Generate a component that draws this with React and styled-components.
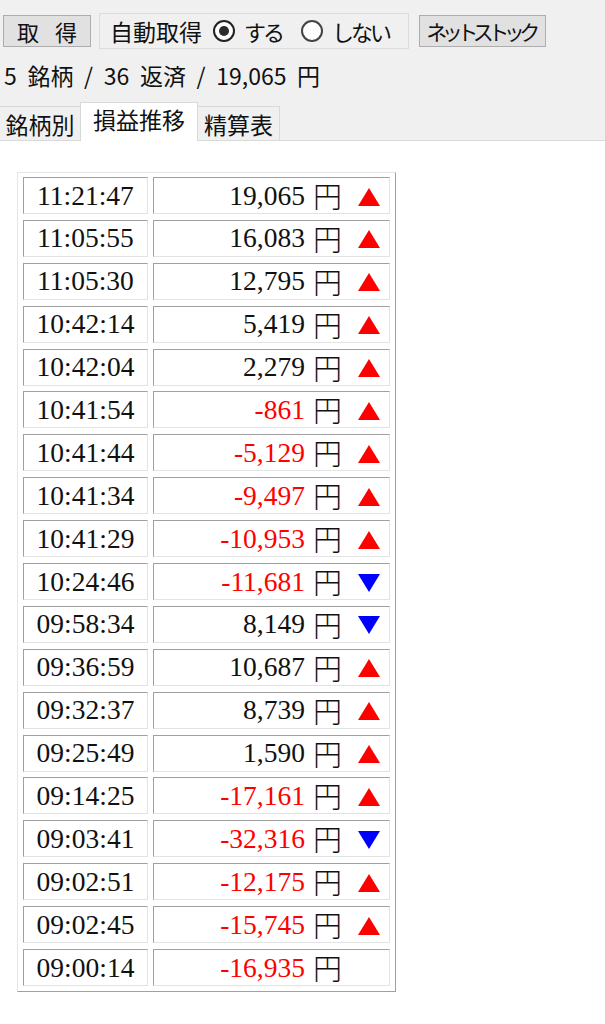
import React from "react";
import styled, { createGlobalStyle } from "styled-components";

const GlobalStyle = createGlobalStyle`
  body {
    margin: 0;
    background: #fff;
    font-family: "Noto Sans CJK JP", "Noto Sans", sans-serif;
    color: #000;
  }
`;

const rows = [
  ["11:21:47", "19,065", "up"],
  ["11:05:55", "16,083", "up"],
  ["11:05:30", "12,795", "up"],
  ["10:42:14", "5,419", "up"],
  ["10:42:04", "2,279", "up"],
  ["10:41:54", "-861", "up"],
  ["10:41:44", "-5,129", "up"],
  ["10:41:34", "-9,497", "up"],
  ["10:41:29", "-10,953", "up"],
  ["10:24:46", "-11,681", "down"],
  ["09:58:34", "8,149", "down"],
  ["09:36:59", "10,687", "up"],
  ["09:32:37", "8,739", "up"],
  ["09:25:49", "1,590", "up"],
  ["09:14:25", "-17,161", "up"],
  ["09:03:41", "-32,316", "down"],
  ["09:02:51", "-12,175", "up"],
  ["09:02:45", "-15,745", "up"],
  ["09:00:14", "-16,935", null],
];

function App() {
  return (
    <>
      <GlobalStyle />
      <Header>
        <Toolbar>
          <Button $width={88}>取 得</Button>
          <Group>
            <GroupLabel>自動取得</GroupLabel>
            <Radio $checked />
            <RadioLabel>する</RadioLabel>
            <Radio $gap={19} />
            <RadioLabel>しない</RadioLabel>
          </Group>
          <Button $width={127} $gap={10} $narrow>
            ネットストック
          </Button>
        </Toolbar>
        <Summary>5 銘柄 / 36 返済 / 19,065 円</Summary>
        <Tabs>
          <Tab $width={82}>銘柄別</Tab>
          <Tab $width={118} $active>
            損益推移
          </Tab>
          <Tab $width={83}>精算表</Tab>
        </Tabs>
      </Header>

      <Content>
        <Table>
          {rows.map(([time, value, dir]) => (
            <React.Fragment key={time}>
              <TimeCell>{time}</TimeCell>
              <AmountCell>
                <Value $negative={value.startsWith("-")}>{value}</Value>
                <Yen>円</Yen>
                <Arrow>
                  {dir && (
                    <svg width="22" height="18" viewBox="0 0 22 18">
                      {dir === "up" ? (
                        <polygon points="11,0 22,18 0,18" fill="#ff0000" />
                      ) : (
                        <polygon points="0,0 22,0 11,18" fill="#0000ff" />
                      )}
                    </svg>
                  )}
                </Arrow>
              </AmountCell>
            </React.Fragment>
          ))}
        </Table>
      </Content>
    </>
  );
}

const Header = styled.div`
  background: #f0f0f0;
  height: 140px;
  border-bottom: 1px solid #d9d9d9;
  display: flex;
  flex-direction: column;
`;

const Toolbar = styled.div`
  display: flex;
  align-items: center;
  padding: 13px 0 0 3px;
  height: 36px;
`;

const Button = styled.div`
  width: ${(p) => p.$width}px;
  height: 32px;
  margin-left: ${(p) => p.$gap || 0}px;
  box-sizing: border-box;
  background: #e1e1e1;
  border: 1px solid #adadad;
  display: flex;
  align-items: center;
  justify-content: center;
  white-space: nowrap;
  font-size: ${(p) => (p.$narrow ? 21 : 22)}px;
  letter-spacing: ${(p) => (p.$narrow ? -5.5 : 0)}px;
  padding-right: ${(p) => (p.$narrow ? 4 : 0)}px;
  word-spacing: 11px;
  color: #111;
`;

const Group = styled.div`
  margin-left: 8px;
  width: 310px;
  height: 36px;
  box-sizing: border-box;
  border: 1px solid #dcdcdc;
  display: flex;
  align-items: center;
  padding-left: 10px;
`;

const GroupLabel = styled.span`
  font-size: 23px;
  color: #111;
`;

const Radio = styled.span`
  width: 22px;
  height: 22px;
  box-sizing: border-box;
  margin-left: ${(p) => p.$gap || 11}px;
  border-radius: 50%;
  border: 2px solid ${(p) => (p.$checked ? "#222" : "#444")};
  background: #fff;
  display: flex;
  align-items: center;
  justify-content: center;

  &::after {
    content: "";
    width: 10px;
    height: 10px;
    border-radius: 50%;
    background: ${(p) => (p.$checked ? "#2b2b2b" : "transparent")};
  }
`;

const RadioLabel = styled.span`
  margin-left: 9px;
  font-size: 22px;
  letter-spacing: -3px;
  white-space: nowrap;
  color: #111;
`;

const Summary = styled.div`
  margin-top: 13px;
  padding-left: 4px;
  height: 26px;
  line-height: 26px;
  font-size: 23px;
  word-spacing: 5.5px;
  color: #111;
`;

const Tabs = styled.div`
  margin-top: auto;
  display: flex;
  align-items: flex-end;
  margin-left: -1px;
`;

const Tab = styled.div`
  width: ${(p) => p.$width}px;
  height: ${(p) => (p.$active ? 39 : 34)}px;
  margin-bottom: ${(p) => (p.$active ? -1 : 0)}px;
  margin-right: -1px;
  box-sizing: border-box;
  border: 1px solid #d9d9d9;
  border-bottom: none;
  background: ${(p) => (p.$active ? "#fff" : "#f0f0f0")};
  position: ${(p) => (p.$active ? "relative" : "static")};
  z-index: ${(p) => (p.$active ? 1 : 0)};
  display: flex;
  align-items: center;
  justify-content: center;
  padding-bottom: ${(p) => (p.$active ? 7 : 0)}px;
  font-size: 23px;
  color: #111;
`;

const Content = styled.div`
  padding: 31px 0 40px 17px;
`;

const Table = styled.div`
  display: grid;
  grid-template-columns: 125px 237px;
  column-gap: 5px;
  row-gap: 5.9px;
  width: fit-content;
  padding: 4px 5px 5px;
  border: 1px solid;
  border-color: #e6e6e6 #a0a0a0 #a0a0a0 #e6e6e6;
  background: #fff;
`;

const Cell = styled.div`
  height: 37px;
  box-sizing: border-box;
  border: 1px solid;
  border-color: #a0a0a0 #e3e3e3 #e3e3e3 #a0a0a0;
  display: flex;
  align-items: center;
  font-family: "Liberation Serif", "Times New Roman", serif;
  font-size: 27.5px;
`;

const TimeCell = styled(Cell)`
  justify-content: center;
  color: #111;
`;

const AmountCell = styled(Cell)`
  justify-content: flex-end;
  padding-right: 9px;
`;

const Value = styled.span`
  color: ${(p) => (p.$negative ? "#ff0000" : "#111")};
`;

const Yen = styled.span`
  margin-left: 8px;
  font-family: "Noto Sans CJK JP", sans-serif;
  font-size: 29px;
  font-weight: 300;
  line-height: 1;
  color: #111;
`;

const Arrow = styled.span`
  width: 22px;
  height: 18px;
  margin-left: 16px;
  display: flex;
  transform: translateY(1px);
`;

export default App;
